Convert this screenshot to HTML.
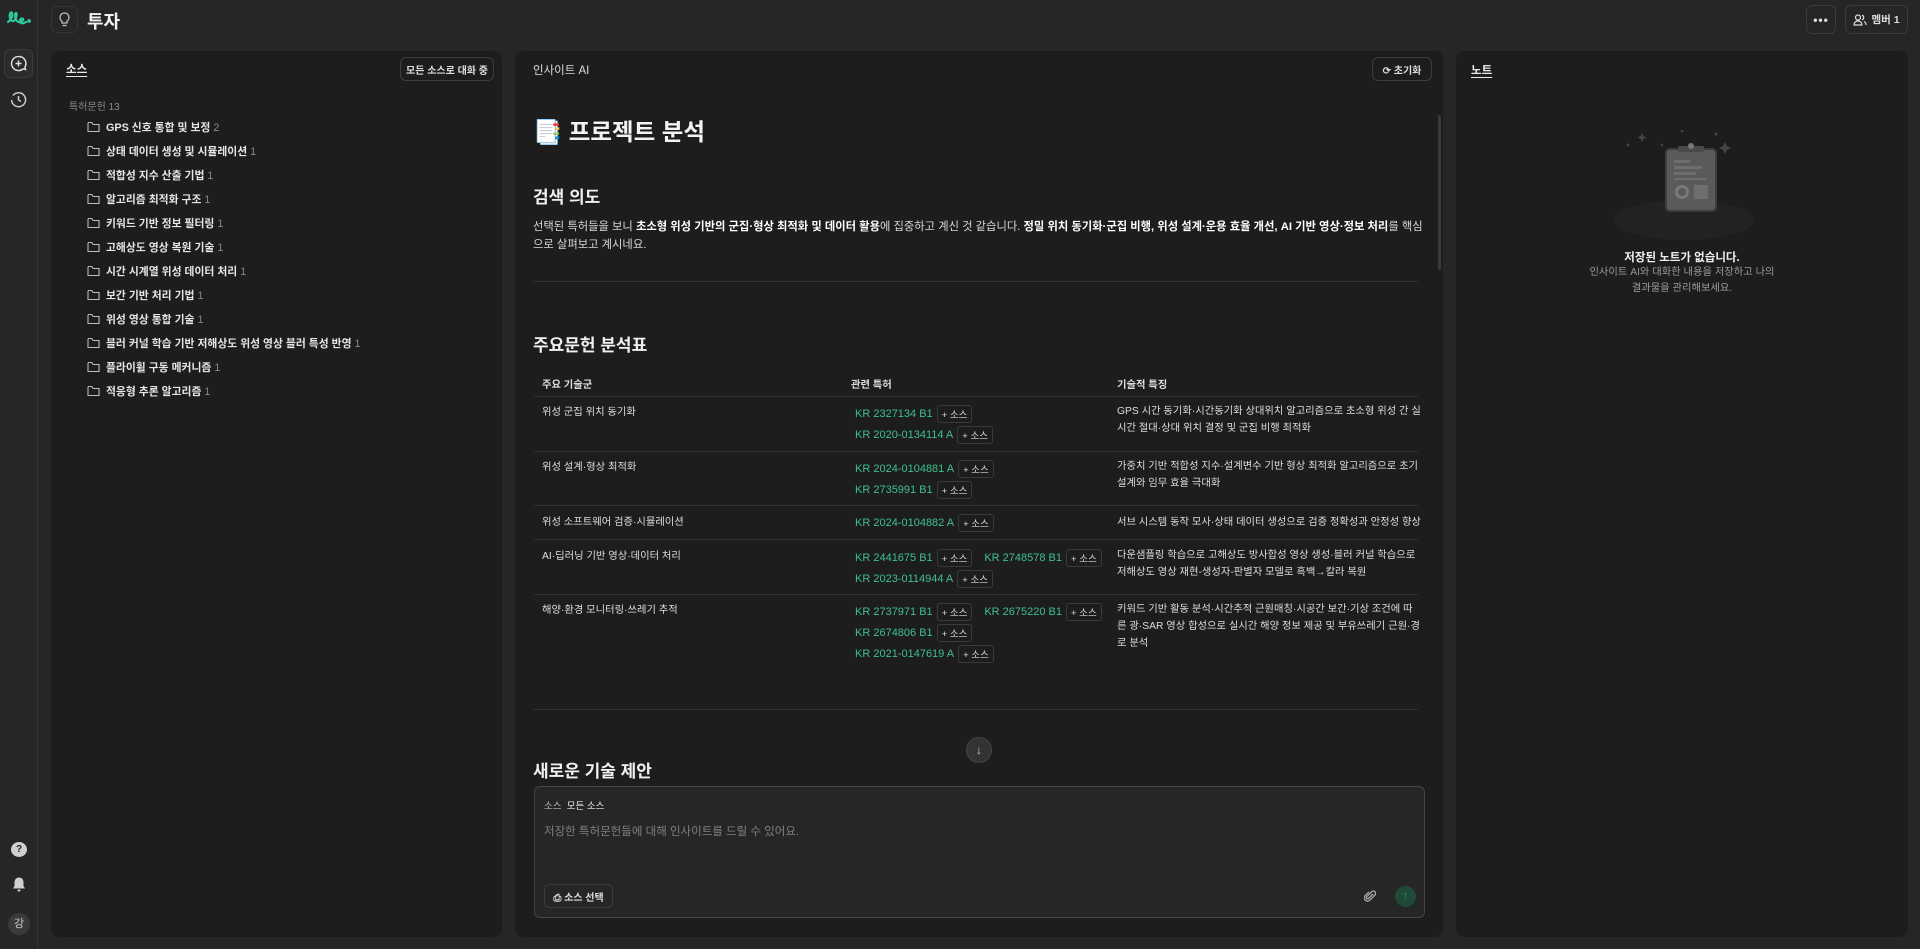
<!DOCTYPE html>
<html><head><meta charset="utf-8">
<style>
*{box-sizing:border-box;margin:0;padding:0}
body{width:1920px;height:949px;background:#262626;color:#e8e8e8;font-family:"Liberation Sans","Noto Sans CJK KR",sans-serif;position:relative;overflow:hidden}
.abs{position:absolute}
.rail{left:0;top:0;width:38px;height:949px;border-right:1px solid #333;background:#262626}
.panel{background:#1d1d1d;border-radius:8px;position:absolute;top:51px;height:886px}
.btn{position:absolute;border:1px solid #3c3c3c;border-radius:6px;font-size:10px;font-weight:bold;color:#ddd;display:flex;align-items:center;justify-content:center;background:#1d1d1d}
.folder{position:absolute;left:87px;font-size:10.8px;font-weight:bold;color:#e6e6e6;display:flex;align-items:center;gap:6px;height:16px}
.folder i{color:#888;font-style:normal;font-weight:normal}
.folder svg{flex:none}
.row{position:absolute;left:534px;width:884px;border-top:1px solid #303030}
.t{position:absolute;font-size:10.3px;color:#ddd}
.lk{position:absolute;font-size:11px;color:#3fc08e;display:flex;align-items:center;gap:4px;white-space:nowrap}
.lk b{font-weight:normal;border:1px solid #3a3a3a;border-radius:3px;color:#ddd;font-size:9.5px;padding:1px 4px;background:#1d1d1d}
</style></head><body>
<div class="abs rail"></div>
<svg class="abs" style="left:6px;top:10px" width="26" height="16" viewBox="0 0 26 16" fill="none" stroke="#2fc79b" stroke-width="2.2" stroke-linecap="round"><path d="M2 12c3-2 5-6 4-9-1-2-3 1-2 5 1 3 3 4 5 2 2-3 2-7 1-7s-2 5 1 8c2 2 4 1 6-1"/><path d="M14 10c1-2 4-2 3 0s-3 2-2 3 3 0 5-1"/><circle cx="23" cy="11" r=".8" fill="#2fc79b"/></svg>
<div class="abs" style="left:4px;top:49px;width:29px;height:29px;border:1px solid #3a3a3a;border-radius:6px;background:#2b2b2b"></div>
<svg class="abs" style="left:10px;top:55px" width="17" height="17" viewBox="0 0 17 17" fill="none" stroke="#ddd" stroke-width="1.5"><path d="M8.5 1.5a7 7 0 1 0 4.5 12.4l2.5.6-.6-2.4A7 7 0 0 0 8.5 1.5z"/><path d="M8.5 5.5v6M5.5 8.5h6"/></svg>
<svg class="abs" style="left:10px;top:91px" width="17" height="17" viewBox="0 0 17 17" fill="none" stroke="#ccc" stroke-width="1.5"><path d="M3 4.5A7 7 0 1 1 1.6 9"/><path d="M8.5 5v4l2.5 1.5"/><path d="M1.5 6.5l.1-.1"/></svg>
<div class="abs" style="left:11px;top:842px;width:16px;height:15px;border-radius:50%;background:#cfcfcf;color:#222;font-size:10px;font-weight:bold;text-align:center;line-height:15px">?</div>
<svg class="abs" style="left:11px;top:876px" width="16" height="17" viewBox="0 0 16 17"><path d="M8 1.5c-3 0-4.5 2.3-4.5 5v3.5L2 12.5h12L12.5 10V6.5c0-2.7-1.5-5-4.5-5z" fill="#cfcfcf"/><rect x="6.5" y="13.5" width="3" height="2" rx="1" fill="#cfcfcf"/></svg>
<div class="abs" style="left:8px;top:913px;width:22px;height:22px;border-radius:50%;background:#3a3a3a;color:#ccc;font-size:11px;text-align:center;line-height:22px">강</div>

<div class="abs" style="left:51px;top:6px;width:27px;height:27px;border:1px solid #353535;border-radius:6px"></div>
<svg class="abs" style="left:58px;top:12px" width="13" height="16" viewBox="0 0 13 16" fill="none" stroke="#bbb" stroke-width="1.3"><path d="M6.5 1a4.5 4.5 0 0 0-2.5 8.2V11h5V9.2A4.5 4.5 0 0 0 6.5 1z"/><path d="M4.5 13.5h4"/></svg>
<div class="abs" style="left:87px;top:8px;font-size:18px;font-weight:bold;color:#f2f2f2">투자</div>
<div class="btn" style="left:1806px;top:5px;width:30px;height:29px;font-size:12px;letter-spacing:1px;background:#262626">•••</div>
<div class="btn" style="left:1845px;top:5px;width:63px;height:29px;font-size:10.5px;background:#262626"><svg width="14" height="12" viewBox="0 0 14 12" fill="none" stroke="#ddd" stroke-width="1.2" style="margin-right:4px"><circle cx="5" cy="3.5" r="2.5"/><path d="M1 11c0-2.5 1.8-4 4-4s4 1.5 4 4z"/><path d="M9 1.2a2.4 2.4 0 0 1 0 4.6M11 7.5c1.2.6 2 1.8 2 3.5"/></svg>멤버 1</div>

<div class="panel" style="left:51px;width:451px"></div>
<div class="abs" style="left:66px;top:61px;font-size:11.5px;font-weight:bold;text-decoration:underline;text-underline-offset:3px">소스</div>
<div class="btn" style="left:400px;top:57px;width:94px;height:24px">모든 소스로 대화 중</div>
<div class="abs" style="left:69px;top:98px;font-size:10px;color:#8a8a8a">특허문헌 13</div>
<div id="fl"></div>

<div class="panel" style="left:515px;width:928px"></div>
<div class="abs" style="left:533px;top:62px;font-size:11.5px;color:#ddd">인사이트 AI</div>
<div class="btn" style="left:1372px;top:57px;width:60px;height:24px">⟳ 초기화</div>
<div class="abs" style="left:1438px;top:115px;width:3px;height:155px;background:#3a3a3a;border-radius:2px"></div>
<div class="abs" style="left:533px;top:113px;font-size:23.5px;font-weight:bold;color:#f3f3f3">📑 프로젝트 분석</div>
<div class="abs" style="left:533px;top:183px;font-size:17px;font-weight:bold;color:#f0f0f0">검색 의도</div>
<div class="abs" style="left:533px;top:218px;width:890px;font-size:11.3px;line-height:18px;color:#d8d8d8">선택된 특허들을 보니 <b style="color:#fff">초소형 위성 기반의 군집·형상 최적화 및 데이터 활용</b>에 집중하고 계신 것 같습니다. <b style="color:#fff">정밀 위치 동기화·군집 비행, 위성 설계·운용 효율 개선, AI 기반 영상·정보 처리</b>를 핵심으로 살펴보고 계시네요.</div>
<div class="abs" style="left:533px;top:281px;width:885px;height:1px;background:#303030"></div>
<div class="abs" style="left:533px;top:331px;font-size:17px;font-weight:bold;color:#f0f0f0">주요문헌 분석표</div>

<div class="t" style="left:542px;top:376px;font-weight:bold">주요 기술군</div>
<div class="t" style="left:851px;top:376px;font-weight:bold">관련 특허</div>
<div class="t" style="left:1117px;top:376px;font-weight:bold">기술적 특징</div>
<div class="row" style="top:396px"></div>
<div class="row" style="top:451px"></div>
<div class="row" style="top:505px"></div>
<div class="row" style="top:539px"></div>
<div class="row" style="top:594px"></div>

<div class="t" style="left:542px;top:403px">위성 군집 위치 동기화</div>
<div class="lk" style="left:855px;top:405px">KR 2327134 B1<b>+ 소스</b></div>
<div class="lk" style="left:855px;top:426px">KR 2020-0134114 A<b>+ 소스</b></div>
<div class="t" style="left:1117px;top:403px;width:305px;line-height:17px">GPS 시간 동기화·시간동기화 상대위치 알고리즘으로 초소형 위성 간 실시간 절대·상대 위치 결정 및 군집 비행 최적화</div>

<div class="t" style="left:542px;top:458px">위성 설계·형상 최적화</div>
<div class="lk" style="left:855px;top:460px">KR 2024-0104881 A<b>+ 소스</b></div>
<div class="lk" style="left:855px;top:481px">KR 2735991 B1<b>+ 소스</b></div>
<div class="t" style="left:1117px;top:458px;width:305px;line-height:17px">가중치 기반 적합성 지수·설계변수 기반 형상 최적화 알고리즘으로 초기 설계와 임무 효율 극대화</div>

<div class="t" style="left:542px;top:513px">위성 소프트웨어 검증·시뮬레이션</div>
<div class="lk" style="left:855px;top:514px">KR 2024-0104882 A<b>+ 소스</b></div>
<div class="t" style="left:1117px;top:513px;white-space:nowrap">서브 시스템 동작 모사·상태 데이터 생성으로 검증 정확성과 안정성 향상</div>

<div class="t" style="left:542px;top:547px">AI·딥러닝 기반 영상·데이터 처리</div>
<div class="lk" style="left:855px;top:549px">KR 2441675 B1<b>+ 소스</b><span style="margin-left:8px">KR 2748578 B1</span><b>+ 소스</b></div>
<div class="lk" style="left:855px;top:570px">KR 2023-0114944 A<b>+ 소스</b></div>
<div class="t" style="left:1117px;top:547px;width:305px;line-height:17px">다운샘플링 학습으로 고해상도 방사합성 영상 생성·블러 커널 학습으로 저해상도 영상 재현-생성자-판별자 모델로 흑백→칼라 복원</div>

<div class="t" style="left:542px;top:601px">해양·환경 모니터링·쓰레기 추적</div>
<div class="lk" style="left:855px;top:603px">KR 2737971 B1<b>+ 소스</b><span style="margin-left:8px">KR 2675220 B1</span><b>+ 소스</b></div>
<div class="lk" style="left:855px;top:624px">KR 2674806 B1<b>+ 소스</b></div>
<div class="lk" style="left:855px;top:645px">KR 2021-0147619 A<b>+ 소스</b></div>
<div class="t" style="left:1117px;top:601px;width:305px;line-height:17px">키워드 기반 활동 분석·시간추적 근원매칭·시공간 보간·기상 조건에 따른 광·SAR 영상 합성으로 실시간 해양 정보 제공 및 부유쓰레기 근원·경로 분석</div>

<div class="abs" style="left:533px;top:709px;width:885px;height:1px;background:#303030"></div>
<div class="abs" style="left:533px;top:757px;font-size:17px;font-weight:bold;color:#f0f0f0;height:26px;overflow:hidden">새로운 기술 제안</div>
<div class="abs" style="left:966px;top:737px;width:26px;height:26px;border-radius:50%;background:#333;border:1px solid #444;color:#ccc;font-size:12px;text-align:center;line-height:24px">↓</div>

<div class="abs" style="left:534px;top:786px;width:891px;height:132px;border:1px solid #444;border-radius:6px;background:#262626"></div>
<div class="abs" style="left:544px;top:798px;font-size:9.5px;color:#bbb">소스 &nbsp;<span style="color:#eee">모든 소스</span></div>
<div class="abs" style="left:544px;top:823px;font-size:11.5px;color:#808080">저장한 특허문헌들에 대해 인사이트를 드릴 수 있어요.</div>
<div class="btn" style="left:544px;top:884px;width:69px;height:24px;background:#262626">⎙ 소스 선택</div>
<svg class="abs" style="left:1364px;top:889px" width="12" height="14" viewBox="0 0 12 14" fill="none" stroke="#aaa" stroke-width="1.3"><path d="M9 5L4.5 9.5a1.2 1.2 0 0 1-1.8-1.8L8 2.5a2.3 2.3 0 0 1 3.2 3.2L5.5 11.5a3.3 3.3 0 0 1-4.6-4.6L5 3"/></svg>
<div class="abs" style="left:1395px;top:886px;width:21px;height:21px;border-radius:50%;background:#1f4a38;color:#4c8a6e;font-size:11px;text-align:center;line-height:21px">↑</div>

<div class="panel" style="left:1456px;width:452px"></div>
<div class="abs" style="left:1471px;top:62px;font-size:11.5px;font-weight:bold;text-decoration:underline;text-underline-offset:3px">노트</div>
<div class="abs" style="left:1614px;top:200px;width:140px;height:40px;border-radius:50%;background:#222"></div>
<svg class="abs" style="left:1620px;top:125px" width="130" height="110" viewBox="0 0 130 110">
<g fill="#444"><path d="M22 8l1.5 3 3 1.5-3 1.5-1.5 3-1.5-3-3-1.5 3-1.5z"/><path d="M105 17l2 4 4 2-4 2-2 4-2-4-4-2 4-2z"/><circle cx="42" cy="20" r="1.3"/><circle cx="8" cy="20" r="1.5"/><circle cx="62" cy="6" r="1.3"/><circle cx="96" cy="9" r="1.5"/></g>
<rect x="46" y="24" width="50" height="62" rx="4" fill="#5a5a5a" stroke="#3e3e3e" stroke-width="2"/>
<rect x="58" y="21" width="26" height="6" rx="2" fill="#4a4a4a"/><circle cx="71" cy="21" r="3" fill="#777"/>
<g fill="#6e6e6e"><rect x="54" y="35" width="16" height="3"/><rect x="54" y="41" width="28" height="3"/><rect x="54" y="47" width="22" height="3"/><rect x="54" y="53" width="32" height="2"/><rect x="74" y="60" width="14" height="14"/></g>
<circle cx="62" cy="67" r="5.5" fill="none" stroke="#7a7a7a" stroke-width="3"/>
</svg>
<div class="abs" style="left:1456px;top:249px;width:452px;text-align:center;font-size:11.5px;font-weight:bold;color:#f0f0f0">저장된 노트가 없습니다.</div>
<div class="abs" style="left:1456px;top:265px;width:452px;text-align:center;font-size:10.3px;line-height:16px;color:#9a9a9a">인사이트 AI와 대화한 내용을 저장하고 나의<br>결과물을 관리해보세요.</div>

<script>
var items=[["GPS 신호 통합 및 보정","2"],["상태 데이터 생성 및 시뮬레이션","1"],["적합성 지수 산출 기법","1"],["알고리즘 최적화 구조","1"],["키워드 기반 정보 필터링","1"],["고해상도 영상 복원 기술","1"],["시간 시계열 위성 데이터 처리","1"],["보간 기반 처리 기법","1"],["위성 영상 통합 기술","1"],["블러 커널 학습 기반 저해상도 위성 영상 블러 특성 반영","1"],["플라이휠 구동 메커니즘","1"],["적응형 추론 알고리즘","1"]];
var h="";items.forEach(function(it,i){h+='<div class="folder" style="top:'+(119+i*24)+'px"><svg width="13" height="12" viewBox="0 0 13 12" fill="none" stroke="#bbb" stroke-width="1.1"><path d="M1 2.2v8.3h11V3.5H6L4.8 1.5H1.7z"/></svg><span>'+it[0]+' <i>'+it[1]+'</i></span></div>';});
document.getElementById("fl").innerHTML=h;
</script>
</body></html>
